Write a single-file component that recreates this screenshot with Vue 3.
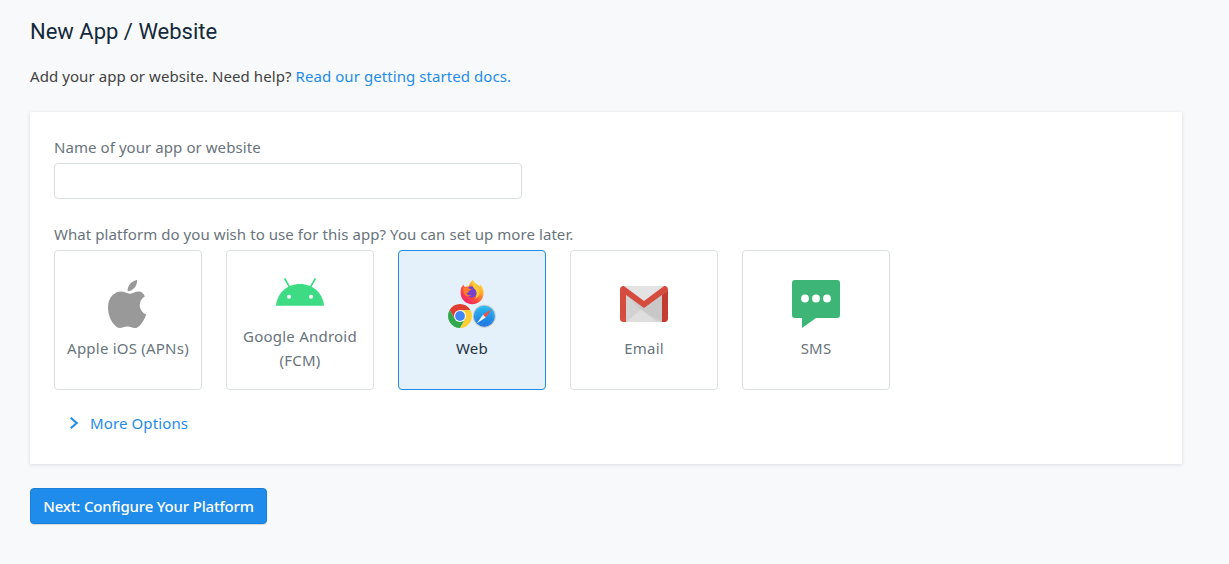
<script setup>
import { ref } from 'vue'

const appName = ref('')
const selected = ref('web')
const platforms = [
  { id: 'ios', label: 'Apple iOS (APNs)' },
  { id: 'android', label: 'Google Android (FCM)' },
  { id: 'web', label: 'Web' },
  { id: 'email', label: 'Email' },
  { id: 'sms', label: 'SMS' },
]
</script>

<template>
  <main class="page">
    <h1 class="title">New App / Website</h1>
    <p class="intro">Add your app or website. Need help? <a class="docs">Read our getting started docs.</a></p>

    <section class="card">
      <label class="label name-label" for="app-name">Name of your app or website</label>
      <input id="app-name" v-model="appName" class="input" type="text" />
      <p class="label question">What platform do you wish to use for this app? You can set up more later.</p>

      <div class="tiles">
        <button
          v-for="p in platforms"
          :key="p.id"
          type="button"
          class="tile"
          :class="[p.id, { active: selected === p.id }]"
          @click="selected = p.id"
        >
          <svg v-if="p.id === 'ios'" class="icon" viewBox="0 0 48 48">
            <path fill="#999" transform="translate(.33 0) scale(1.048 1)" d="M38.6 16.4c-2.9 1.8-4.8 4.8-4.8 8.6 0 4.4 2.5 7.8 6.200 9.500-1.200 3.700-3.200 7.400-5.600 10.400-1.700 2.100-3.300 3.100-5.200 3.100-2.700 0-4-1.600-7.300-1.600S17.300 48 14.900 48c-2.200 0-4.100-1.400-6.200-4.200C5.500 39.600 3.500 33.500 3.500 27.500c0-9.800 6.100-15.900 12.500-15.900 3.300 0 5.800 2.200 8.100 2.200 2 0 5-2.300 8.900-2.300 2.200 0 4.500 1.500 5.600 4.900z" />
            <path fill="#999" d="M23.600 11.300c-.3-5.700 3.800-10.300 9.400-11.300.6 5.400-3.800 11.200-9.400 11.300z" />
          </svg>

          <svg v-else-if="p.id === 'android'" class="icon" viewBox="0 0 48 48">
            <path d="M8.900 11l4.400 7.600M39.100 11l-4.400 7.600" stroke="#3ddc84" stroke-width="1.700" stroke-linecap="round" />
            <path fill="#3ddc84" d="M0 37.800C1 25.400 10.700 16 24 16s23 9.400 24 21.800z" />
            <circle cx="13" cy="28.800" r="2" fill="#fff" />
            <circle cx="35" cy="28.800" r="2" fill="#fff" />
          </svg>

          <svg v-else-if="p.id === 'web'" class="icon" viewBox="0 0 48 48">
            <defs>
              <linearGradient id="fox" x1="1" y1="0" x2=".2" y2="1">
                <stop offset="0" stop-color="#fff44f" />
                <stop offset=".35" stop-color="#ffb02c" />
                <stop offset=".65" stop-color="#ff4f3c" />
                <stop offset="1" stop-color="#f01a70" />
              </linearGradient>
              <linearGradient id="compass" x1="0" y1="0" x2="0" y2="1">
                <stop offset="0" stop-color="#2bbcf0" />
                <stop offset="1" stop-color="#1b70df" />
              </linearGradient>
            </defs>
            <path fill="url(#fox)" d="M13.300 7.600c1.100-1.500 1.900-2.400 2.200-3.100.4 1.500 1 2.200 1.800 2.600 1-.7 2-.8 3.200-.7 1.200-2.700 2.500-4.900 4.300-6.400 1.300 3.300 5 4.200 7 6.600l.5-2.100c2.300 2.700 3.400 5.700 3.300 9C35.400 20 30.100 24.200 24.100 24.200S13 19.500 12.700 13.500c-.1-2.100-.1-4.100.6-5.900z" />
            <circle cx="23.600" cy="12" r="5.700" fill="#7542cf" />
            <path fill="#ff7a2c" d="M15.200 8.400c2.300-1.600 4.600-1.300 5.800.3l2.600.4c-.6 1.300-2.200 1.500-3 2.400-.2 1.400-1.300 1.500-2.300 1.900.9 1.500 3 2.200 5.500 1.600-1.800 2-6.200 2-7.700-1-.9-1.800-1.100-3.800-.9-5.600z" />
            <path fill="#ffcb35" d="M24.800 0c1.300 4.800 7.300 6.100 6.900 12-.2 3.500-2 5.700-4.400 7 1.700-3.900 2.200-8.300-1.500-10.800-1.900-2.900-1.700-5.700-1-8.200z" />
            <path fill="#df3e31" d="M12 36V30h10.390A12 12 0 0 0 1.610 30l5.190 9z" />
            <path fill="#30a84b" d="M12 36l5.200 3L12 48A12 12 0 0 1 1.610 30L6.800 39z" />
            <path fill="#fdce31" d="M12 30h10.390A12 12 0 0 1 12 48l5.200-9z" />
            <circle cx="12" cy="36" r="6" fill="#fff" />
            <circle cx="12" cy="36" r="4.900" fill="#4285f4" />
            <circle cx="36.300" cy="36.200" r="11.500" fill="#bfcbd4" />
            <circle cx="36.300" cy="36.200" r="10.500" fill="url(#compass)" />
            <circle cx="36.300" cy="36.200" r="8.900" fill="none" stroke="#89cbf5" stroke-width=".6" stroke-dasharray=".4 1" />
            <path fill="#ff493d" d="M43.700 29.300l-8.700 5.500 2.700 2.800z" />
            <path fill="#f4f4f4" d="M28.900 43.200l8.800-5.600-2.700-2.800z" />
          </svg>

          <svg v-else-if="p.id === 'email'" class="icon" viewBox="0 0 48 48">
            <path fill="#e3e3e3" d="M3 6h42v36H3z" />
            <path fill="#d2d2d2" d="M6 12l18 16 18-16v30H6z" />
            <path fill="#bdbdbd" d="M6 14l15 16L42 42V14L24 28z" opacity=".5" />
            <path fill="#dedede" d="M6 42l15-12.500L37 42z" />
            <path fill="#d54b3d" d="M0 9.600C0 7.600 1.300 6 3.300 6h.6L24 21 44.100 6h.6C46.700 6 48 7.600 48 9.600v.8L24 28 0 10.400z" />
            <path fill="#d54b3d" d="M0 9l6 4.700V42H3.300C1.200 42 0 40.800 0 38.800z" />
            <path fill="#c23c31" d="M48 10.200l-6 4.500V42h2.700c2.100 0 3.300-1.200 3.300-3.200z" />
          </svg>

          <svg v-else class="icon" viewBox="0 0 48 48">
            <path fill="#3cb576" d="M3 0h42a3 3 0 0 1 3 3v32a3 3 0 0 1-3 3H24L10 48V38H3a3 3 0 0 1-3-3V3a3 3 0 0 1 3-3z" />
            <g fill="#fff">
              <circle cx="13" cy="18.500" r="3.900" />
              <circle cx="24" cy="18.500" r="3.900" />
              <circle cx="35" cy="18.500" r="3.900" />
            </g>
          </svg>
          <span class="tile-label">{{ p.label }}</span>
        </button>
      </div>

      <a class="more">
        <svg class="chevron" viewBox="0 0 8 12"><path d="M.7.700L6.700 6l-6 5.300" fill="none" stroke="currentColor" stroke-width="2" /></svg>
        <span>More Options</span>
      </a>
    </section>

    <button type="button" class="next"><span>Next: Configure Your Platform</span></button>
  </main>
</template>

<style>
body {
  background: #f8f9fb;
}
</style>

<style scoped>
.page {
  box-sizing: border-box;
  min-height: 564px;
  padding: 16px 47px 40px 30px;
  font: 15px/24px 'Noto Sans', 'Open Sans', sans-serif;
  letter-spacing: 0.07px;
  color: #424242;
}
.title {
  margin: 0;
  font: 400 22px/32px Roboto, sans-serif;
  letter-spacing: 0;
  color: #14293a;
}
.intro {
  margin: 16px 0 24px;
}
.docs,
.more {
  color: #1f8ceb;
}
.card {
  box-sizing: border-box;
  height: 352px;
  padding: 23px 24px 24px;
  background: #fff;
  box-shadow: 0 1px 4px rgba(5, 27, 44, 0.13);
}
.label {
  display: block;
  margin: 0;
  color: #69747c;
}
.input {
  display: block;
  box-sizing: border-box;
  width: 468px;
  height: 36px;
  margin: 4px 0 23px;
  padding: 0 12px;
  border: 1px solid #dadfe1;
  border-radius: 4px;
  outline: none;
  font: inherit;
}
.tiles {
  display: flex;
  gap: 24px;
  margin: 4px 0 21px;
}
.tile {
  box-sizing: border-box;
  display: flex;
  flex-direction: column;
  align-items: center;
  justify-content: center;
  gap: 8px;
  width: 148px;
  height: 140px;
  padding: 0 8px;
  border: 1px solid #dadfe1;
  border-radius: 4px;
  background: #fff;
  font: inherit;
  letter-spacing: 0.22px;
  color: #69747c;
}
.tile.active {
  border-color: #1f8ceb;
  background: #e4f0fa;
  color: #25333e;
}
.icon {
  display: block;
  flex: none;
  width: 48px;
  height: 48px;
}
.more {
  display: flex;
  align-items: center;
  gap: 12px;
  padding-left: 16px;
  letter-spacing: 0.12px;
}
.chevron {
  width: 8px;
  height: 12px;
}
.next {
  display: flex;
  align-items: center;
  justify-content: center;
  box-sizing: border-box;
  width: 237px;
  height: 36px;
  margin-top: 24px;
  padding: 0;
  border: 1px solid #187fd9;
  border-radius: 4px;
  background: #1f8ceb;
  box-shadow: 0 1px 1px rgba(5, 27, 44, 0.15);
  font: 500 15px/24px 'Noto Sans', 'Open Sans', sans-serif;
  letter-spacing: -0.19px;
  color: #fff;
  white-space: nowrap;
}
</style>
